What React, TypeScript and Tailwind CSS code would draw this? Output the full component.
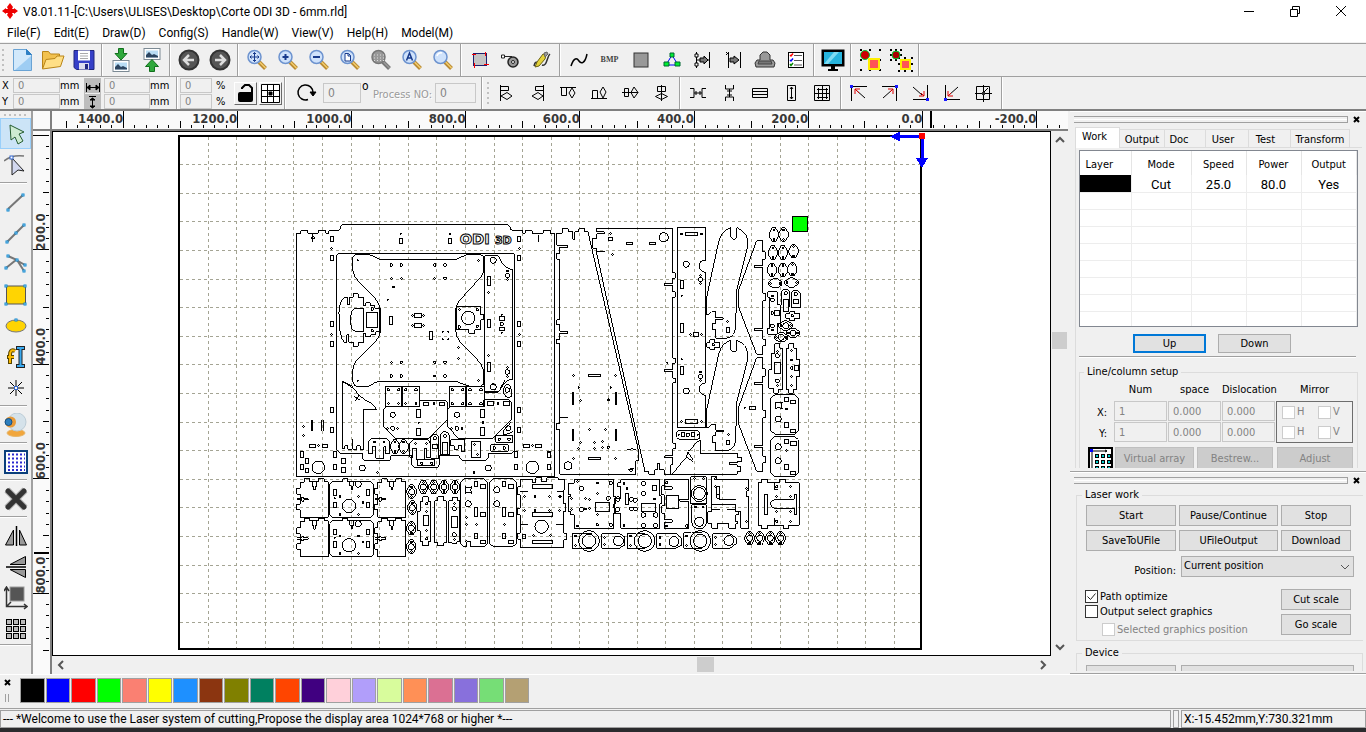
import type { ReactNode } from "react";

const ui = "font-['DejaVu_Sans_Condensed','Liberation_Sans',sans-serif]";
const segoe = "font-[Roboto,'Open_Sans',sans-serif]";

/* ---------- toolbar pieces ---------- */

function Tool({ label, children, on = false }: { label: string; children: ReactNode; on?: boolean }) {
  return (
    <button
      type="button"
      aria-label={label}
      className={
        "flex h-[31px] w-[31px] shrink-0 items-center justify-center " +
        (on ? "border border-[#99cffa] bg-[#cce4f7]" : "")
      }
    >
      <svg width="24" height="24" viewBox="0 0 24 24" fill="none" stroke="#000">
        {children}
      </svg>
    </button>
  );
}

function Sep() {
  return <span className="mx-[2px] w-[2px] shrink-0 self-stretch border-r border-white bg-[#a0a0a0]" />;
}

function HSep() {
  return <span className="my-[2px] h-[2px] w-[27px] shrink-0 border-b border-white bg-[#a0a0a0]" />;
}

function Grip() {
  return (
    <svg width="3" height="24" className="mr-[1px] ml-[2px] shrink-0">
      <path d="M1 1v22" stroke="#c0c0c0" strokeWidth="2" strokeDasharray="2 3" />
    </svg>
  );
}

function Lens({ children, grey = false }: { children?: ReactNode; grey?: boolean }) {
  return (
    <>
      <path d="M14 14l6.500 6.500" stroke={grey ? "#777" : "#b98a32"} strokeWidth="4" />
      <path d="M14.500 14l6 6" stroke={grey ? "#999" : "#f3cd6e"} strokeWidth="1.500" />
      <circle cx="9.500" cy="9" r="6.500" fill={grey ? "#999" : "#cfe2fb"} stroke={grey ? "#777" : "#6d93cf"} strokeWidth="1.500" />
      {children}
    </>
  );
}

function Picture({ y }: { y: number }) {
  return (
    <g transform={`translate(0 ${y})`}>
      <rect x="4" y="0.500" width="16" height="11" fill="#fff" stroke="#7c8a94" />
      <rect x="6" y="2.500" width="12" height="7" fill="#b8dcf4" stroke="none" />
      <path d="M6 9.500V7l3-3 3 3 2-1 4 2v1.500z" fill="#2c4560" stroke="none" />
    </g>
  );
}

const dot = "#1a1aff";

function FileTools() {
  return (
    <div className="flex h-[32px] items-center">
      <Grip />
      <Tool label="New">
        <path d="M3.500 1.500h13l5 5v16h-18z" fill="#d2e9fb" stroke="#6aa3d4" />
        <path d="M5 22L21 8v14z" fill="#9ecdf3" stroke="none" />
        <path d="M16.500 1.500v5h5z" fill="#2f80c4" stroke="#2f80c4" />
      </Tool>
      <Tool label="Open">
        <path d="M1.500 20.500V3.500h6l2 2.500h9v4" fill="#f2c14e" stroke="#b98518" />
        <path d="M1.500 21L5 11.500l9-1 2-2.500h7l-3.500 10.500z" fill="#ffdf86" stroke="#b98518" />
      </Tool>
      <Tool label="Save">
        <path d="M2 2.500h20v19H4.500L2 19.500z" fill="#3640c8" stroke="#20267f" />
        <path d="M6 2.500h12v10H6z" fill="#fff" stroke="none" />
        <path d="M8 5.500h8M8 8h8M8 10.500h8" stroke="#aaa" />
        <path d="M7 15h10v6.500H7z" fill="#dde" stroke="none" />
        <path d="M13 16h3v5h-3z" fill="#20267f" stroke="none" />
      </Tool>
      <Sep />
      <Tool label="Import">
        <Picture y={12} />
        <path d="M9.500 0.500h5v5h3.500l-6 6.500-6-6.500h3.500z" fill="#2fa83c" stroke="#11701c" />
      </Tool>
      <Tool label="Export">
        <Picture y={0} />
        <path d="M9.500 23.500h5v-5h4l-6.500-7-6.500 7h4z" fill="#2fa83c" stroke="#11701c" />
      </Tool>
      <Sep />
      <Tool label="Undo">
        <circle cx="12" cy="12" r="9.500" fill="#555" stroke="#333" strokeWidth="2" />
        <path d="M17 12H8M12 7l-5 5 5 5" stroke="#ddd" strokeWidth="2.500" />
      </Tool>
      <Tool label="Redo">
        <circle cx="12" cy="12" r="9.500" fill="#555" stroke="#333" strokeWidth="2" />
        <path d="M7 12h9M12 7l5 5-5 5" stroke="#ddd" strokeWidth="2.500" />
      </Tool>
      <Sep />
      <Tool label="Pan">
        <Lens><path d="M9.500 4.500v9M5 9h9M8 6l1.500-1.500L11 6M8 12l1.500 1.500L11 12M6.500 7.500L5 9l1.500 1.500M12.500 7.500L14 9l-1.500 1.500" stroke="#173a8c" /></Lens>
      </Tool>
      <Tool label="Zoom in">
        <Lens><path d="M9.500 6v6M6.500 9h6" stroke="#173a8c" strokeWidth="2" /></Lens>
      </Tool>
      <Tool label="Zoom out">
        <Lens><path d="M6 9h7" stroke="#173a8c" strokeWidth="2" /></Lens>
      </Tool>
      <Tool label="Zoom page">
        <Lens><path d="M7 5.500h3.500l2 2v5.500H7zM10 5.500v2.500h2.500" fill="#fff" stroke="#173a8c" /></Lens>
      </Tool>
      <Tool label="Zoom frame">
        <Lens grey><path d="M5 7h10M5 10h10M5 12.500h10" stroke="#ddd" strokeWidth="1" strokeDasharray="1 2" /></Lens>
      </Tool>
      <Tool label="Zoom all">
        <Lens><path d="M6.500 12.500l3-7.500 3 7.500M7.500 10h4" stroke="#173a8c" strokeWidth="1.500" /></Lens>
      </Tool>
      <Tool label="Zoom select">
        <Lens><path d="M6 8a4 4 0 0 1 5-3" stroke="#fff" strokeWidth="1.500" /></Lens>
      </Tool>
      <Sep />
      <Tool label="Track frame">
        <rect x="5.500" y="5.500" width="13" height="12" fill="#c4c4c4" stroke="#1f1f6c" />
        <path d="M4 6.500h4M17.500 4v4M16 16.500h5M6.500 15v5" stroke="#f00" />
      </Tool>
      <Tool label="Cut point">
        <path d="M4 8.500h9" stroke="#222" />
        <path d="M2.500 7h3v3h-3z" fill="#fff" stroke="#222" />
        <circle cx="14" cy="14" r="5" fill="#999" stroke="#222" strokeWidth="1.500" />
        <circle cx="14" cy="14" r="1.500" fill="#fff" stroke="#222" />
      </Tool>
      <Tool label="Edit cut">
        <path d="M4 18c1-5 3-4 4-3M12 17c5 2 5-9 8-11" stroke="#333" strokeWidth="1.500" />
        <path d="M5 19l2-5 6-8 3 1-1 4-6 7z" fill="#e4d23a" stroke="#6b6212" />
        <path d="M14 5l3-1 1 2-3 3z" fill="#999" stroke="#666" />
      </Tool>
      <Sep />
      <Tool label="Curve smooth">
        <path d="M4 18c3-9 6-8 8-5s6 3 8-7" strokeWidth="1.500" />
      </Tool>
      <button type="button" className="flex h-[31px] w-[31px] items-center justify-center font-['Liberation_Serif',serif] text-[8px] font-bold text-[#444]">
        BMP
      </button>
      <Tool label="Fill">
        <rect x="5" y="5" width="14" height="14" fill="#999" stroke="#333" />
      </Tool>
      <Tool label="Group nodes">
        <path d="M12 7L6 17M12 7l6 10M6 17h12" stroke="#00f" />
        <path d="M10 5h4v4h-4zM4 14h5v4H4zM15 14h5v4h-5z" fill="#0e3" stroke="#063" />
      </Tool>
      <Tool label="Offset curve">
        <path d="M5.500 4v16M18.500 4v16M5 12h4M15 12h3" />
        <path d="M9 10h4V8l4 4-4 4v-2H9z" fill="#777" />
        <path d="M4 6h3v3H4zM4 15h3v3H4z" fill="#fff" />
      </Tool>
      <Tool label="Join">
        <path d="M6.500 5v15M18.500 4v16M4 4l3 3M7 4L4 7" />
        <path d="M8 10h4V8l5 4-5 4v-2H8z" fill="#777" />
      </Tool>
      <Tool label="Preview path">
        <path d="M7 12V7l3-3h4l3 3v5h3l2 3-1 4H3l-1-4 2-3z" fill="#999" stroke="#333" />
        <path d="M6 13h12l1 3H5z" fill="#777" stroke="#444" />
      </Tool>
      <Tool label="Check list">
        <rect x="4.500" y="4.500" width="15" height="15" fill="#fff" />
        <path d="M10 7.500h8M10 12.500h8M10 17h8" stroke="#555" />
        <path d="M6 7l1 1 2-2.500" stroke="#f00" strokeWidth="1.500" />
        <path d="M6 12l1 1 2-2.500" stroke="#00f" strokeWidth="1.500" />
        <path d="M6 16l1 1.500 2-2.500" stroke="#080" strokeWidth="1.500" />
      </Tool>
      <Sep />
      <Tool label="Monitor">
        <rect x="1" y="2" width="22" height="16" fill="#000" />
        <rect x="3" y="4" width="18" height="12" fill="#27b4dd" stroke="none" />
        <path d="M3 16L13 4h5L7 16z" fill="#7fdcf2" stroke="none" />
        <path d="M10 18h4v3h3v2H7v-2h3z" fill="#000" stroke="none" />
      </Tool>
      <Sep />
      <Tool label="Group">
        <path d="M2 2h2M11 2h2M21 2h2M2 22h2M11 22h2M21 22h2M2 12h2M21 12h2" strokeWidth="2" />
        <circle cx="7" cy="7" r="4.500" fill="#c00" stroke="#0c3" />
        <rect x="11" y="11" width="10" height="10" fill="#f55" stroke="#fe0" strokeWidth="2" />
      </Tool>
      <Tool label="Ungroup">
        <path d="M1 2h2M6 2h2M11 2h2M1 7h2M11 7h2M1 12h2M6 12h2M9 10h2M15 10h2M22 10h2M9 16h2M22 16h2M9 23h2M15 23h2M22 23h2" strokeWidth="2" />
        <circle cx="7" cy="7" r="4" fill="#a00" stroke="#0c3" />
        <rect x="12" y="12" width="9" height="9" fill="#f55" stroke="#fe0" strokeWidth="2" />
      </Tool>
      <Sep />
    </div>
  );
}

function NumField({ label, value, className }: { label: string; value: string; className: string }) {
  return (
    <input
      aria-label={label}
      defaultValue={value}
      disabled
      className={"border border-[#c8c8c8] bg-[#f0f0f0] pl-1 text-[11px] text-[#838383] outline-none " + className}
    />
  );
}

const alignIcons: [string, string][] = [
  ["Align left", "M6.500 4v16M6.500 5.500h8v4h-8M7 15l6-3.500 5 3.500-5 3.500z"],
  ["Align right", "M18.500 4v16M18.500 5.500h-8v4h8M7 15l6-3.500 5 3.500-5 3.500z"],
  ["Align top", "M4 6.500h16M5.500 6.500v8h5v-8M16 7l3 5-3 5-3-5z"],
  ["Align bottom", "M4 17.500h16M5.500 17.500v-8h5v8M16 6l3 5-3 6-3-6z"],
  ["Align middle", "M4 11.500h16M6.500 7.500h4v8h-4zM16 6l4 5.500-4 5.500-3-5.500z"],
  ["Align center", "M12.500 4v16M8.500 5.500h8v5h-8zM12.500 12.500l6 3-6 3-6-3z"],
];

const sizeIcons: [string, string][] = [
  ["Space across", "M4 7.500h4v9H4M20 7.500h-4v9h4M8 12h8M10 10v4M14 10v4"],
  ["Space down", "M8.500 4v4h8V4M8.500 20v-4h8v4M12.500 8v8M10 10h5M10 14h5"],
  ["Same width", "M4.500 7.500h15v9h-15zM5 10.500h14M5 13.500h14"],
  ["Same height", "M8.500 4.500h8v15h-8zM12.500 6v12M11 8l1.500-2L14 8M11 16l1.500 2 1.500-2"],
  ["Same size", "M4.500 4.500h15v15h-15zM12.500 5v15M5 12.500h15M7 8.500h11M7 16.500h11M8.500 7v11M16.500 7v11"],
];

function AxisTools() {
  return (
    <div className={"flex h-[32px] items-center overflow-hidden " + ui}>
      <div className="grid shrink-0 grid-cols-[13px_47px_24px] items-center gap-y-[1px] text-[11px] leading-[15px]">
        <span className="pl-[2px]">X</span>
        <NumField label="X" value="0" className="h-[15px]" />
        <span>mm</span>
        <span className="pl-[2px]">Y</span>
        <NumField label="Y" value="0" className="h-[15px]" />
        <span>mm</span>
      </div>
      <svg width="17" height="31" className="shrink-0 bg-[#bdbdbd]" stroke="#000" fill="#000">
        <path d="M1 15.500h15" stroke="#eee" />
        <path d="M3 9.500h12M6 7L3 9.500 6 12zM12 7l3 2.500-3 2.500zM2.500 5v9M15.500 5v9" />
        <path d="M8.500 20v10M6 22l2.500-2 2.500 2zM5 18.500h7M6 28l2.500 2 2.500-2z" />
      </svg>
      <div className="grid shrink-0 grid-cols-[46px_24px] items-center gap-y-[1px] pl-[3px] text-[11px] leading-[15px]">
        <NumField label="Width" value="0" className="h-[15px]" />
        <span>mm</span>
        <NumField label="Height" value="0" className="h-[15px]" />
        <span>mm</span>
      </div>
      <Sep />
      <div className="grid shrink-0 grid-cols-[32px_22px] items-center gap-y-[1px] text-[11px] leading-[15px]">
        <NumField label="Scale X" value="0" className="h-[15px] w-8" />
        <span className="pl-1">%</span>
        <NumField label="Scale Y" value="0" className="h-[15px] w-8" />
        <span className="pl-1">%</span>
      </div>
      <button type="button" aria-label="Lock ratio" className="h-[23px] w-[23px] shrink-0 border border-r-[#696969] border-b-[#696969] border-t-white border-l-white">
        <svg width="21" height="21" fill="none" stroke="#000" strokeWidth="2">
          <path d="M7 6V5l3-3h4l3 3v6" />
          <rect x="4" y="10" width="13" height="8" rx="1" fill="#000" />
        </svg>
      </button>
      <button type="button" aria-label="Anchor point" className="ml-[2px] h-[23px] w-[23px] shrink-0 border border-r-[#696969] border-b-[#696969] border-t-white border-l-white">
        <svg width="21" height="21" fill="none" stroke="#000">
          <path d="M1.500 1.500h18v18h-18z" fill="#fff" />
          <path d="M7.500 1v19M13.500 1v19M1 7.500h19M1 13.500h19" />
          <path d="M9 9h3v3H9z" fill="#000" />
        </svg>
      </button>
      <Sep />
      <svg width="35" height="24" fill="none" stroke="#000" className="shrink-0">
        <path d="M20 18.500a7.500 7.500 0 1 1 5-7" strokeWidth="1.500" />
        <path d="M22 11h6l-3 4z" fill="#000" />
      </svg>
      <NumField label="Angle" value="0" className="h-5 w-[38px] shrink-0 text-[12px]" />
      <span className="w-[12px] shrink-0 self-start pt-[2px] pl-[1px] text-[12px] leading-[15px]">o</span>
      <label htmlFor="process-no" className="shrink-0 pt-1 pr-[3px] text-[11px] text-[#9a9a9a] [text-shadow:1px_1px_#fff]">
        Process NO:
      </label>
      <input id="process-no" disabled defaultValue="0" className="h-5 w-[41px] shrink-0 border border-[#c8c8c8] pl-1 text-[12px] text-[#838383]" />
      <span className="w-[3px] shrink-0" />
      <Sep />
      <Grip />
      {alignIcons.map(([label, d]) => (
        <Tool key={label} label={label}>
          <path d={d} />
        </Tool>
      ))}
      <Sep />
      {sizeIcons.map(([label, d]) => (
        <Tool key={label} label={label}>
          <path d={d} />
        </Tool>
      ))}
      <Sep />
      <Tool label="Move to top left">
        <path d="M4.500 20V5.500H20M18 17L9 9" />
        <path d="M12 12L8 8M8 13V8h5" stroke="#d00" />
        <path d="M3 4h3v3H3z" fill={dot} stroke="none" />
      </Tool>
      <Tool label="Move to top right">
        <path d="M4 5.500h14.500V20M5 17l9-8" />
        <path d="M12 11l3-3M10 8h5v5" stroke="#d00" />
        <path d="M17 4h3v3h-3z" fill={dot} stroke="none" />
      </Tool>
      <Tool label="Move to bottom right">
        <path d="M4 18.500h14.500V4M4 6l9 8" />
        <path d="M12 12l3 3M15 10v5h-5" stroke="#d00" />
        <path d="M17 17h3v3h-3z" fill={dot} stroke="none" />
      </Tool>
      <Tool label="Move to bottom left">
        <path d="M20 18.500H5.500V4M18 6l-9 8" />
        <path d="M11 12l-3 3M8 10v5h5" stroke="#d00" />
        <path d="M4 17h3v3H4z" fill={dot} stroke="none" />
      </Tool>
      <Tool label="Move to center">
        <path d="M5.500 5.500h13v13h-13zM12.500 4v17M4 12.500h17M12 12l5-5" />
        <path d="M11 11h3v3h-3z" fill="#333" stroke="none" />
      </Tool>
      <Sep />
    </div>
  );
}

const node = (x: number, y: number) => <rect key={`${x}-${y}`} x={x - 1} y={y - 1} width="2" height="2" fill="#fff" stroke="#0a86d0" />;

function DrawTools() {
  return (
    <div className="flex w-[33px] shrink-0 flex-col border-r-2 border-[#a0a0a0]">
      <svg width="26" height="7" className="ml-1 shrink-0">
        <path d="M0 4h24" stroke="#c0c0c0" strokeWidth="2" strokeDasharray="2 3" />
      </svg>
      <Tool label="Select" on>
        <path d="M6 3l14 7-5 2 4 7-5 3-3-7-4 3z" fill="#cdebd2" stroke="#255c30" />
      </Tool>
      <Tool label="Edit nodes">
        <path d="M0 8c6-5 12-6 20-5" stroke="#777" strokeWidth="1.500" />
        <path d="M8 5l12 13-6-1-6 5z" fill="#d3d8ef" stroke="#222" />
        <rect x="6" y="3" width="3" height="3" fill="#fff" stroke="#36c" />
      </Tool>
      <HSep />
      <Tool label="Line">
        <path d="M4 19L19 5" stroke="#777" strokeWidth="2" />
        {[node(4, 20), node(19, 5)]}
      </Tool>
      <Tool label="Polyline">
        <path d="M3 21L20 4" stroke="#777" strokeWidth="2" />
        {[node(3, 21), node(12, 12), node(20, 4)]}
      </Tool>
      <Tool label="Bezier">
        <path d="M4 4l9 4 7 11M2 16l10-8 9 5" stroke="#777" strokeWidth="2" />
        {[node(4, 4), node(2, 16), node(13, 8), node(21, 13), node(20, 19)]}
      </Tool>
      <Tool label="Rectangle">
        <rect x="2.500" y="3" width="19" height="18" fill="#ffd402" stroke="#555" />
        {[node(2, 3), node(21, 3), node(2, 21), node(21, 21)]}
      </Tool>
      <Tool label="Ellipse">
        <ellipse cx="12" cy="12" rx="10" ry="6" fill="#ffd402" stroke="#777" />
        {node(12, 6)}
      </Tool>
      <Tool label="Text">
        <path d="M11 6c-4-2-5 1-5 4v9M3 12h7" stroke="#5a4600" strokeWidth="4" />
        <path d="M11 6c-4-2-5 1-5 4v8M4 12h6" stroke="#f8b800" strokeWidth="2" />
        <path d="M12 3h9M16.500 3v18M12 21h9" stroke="#222" strokeWidth="4" />
        <path d="M13 3h7M16.500 3v18M13 21h7" stroke="#39a9ef" strokeWidth="2" />
      </Tool>
      <Tool label="Point">
        <path d="M12 4v16M4 12h16M6 6l12 12M18 6L6 18" />
        <rect x="10.500" y="10.500" width="3" height="3" fill="#fff" stroke="#36c" />
      </Tool>
      <HSep />
      <Tool label="Camera">
        <ellipse cx="12" cy="20" rx="9" ry="3.500" fill="#f1a63c" stroke="#e6b569" />
        <circle cx="13" cy="9" r="9" fill="#d5e2ea" stroke="#bcccd6" />
        <circle cx="6.500" cy="9" r="5.500" fill="#e89a38" stroke="none" />
        <circle cx="4.500" cy="9" r="3.500" fill="#2d7fbe" stroke="#174f80" />
      </Tool>
      <HSep />
      <Tool label="Grid">
        <rect x="1" y="1" width="22" height="22" fill="#fff" stroke="#0b3f7c" strokeWidth="2" />
        <path d="M4 4.500h17M4 8.500h17M4 12.500h17M4 16.500h17M4 20h17" stroke="#2a2ad0" strokeWidth="2" strokeDasharray="2 2" />
      </Tool>
      <HSep />
      <Tool label="Delete">
        <path d="M3 3l18 18M21 3L3 21" stroke="#aaa" strokeWidth="7" />
        <path d="M4 4l16 16M20 4L4 20" stroke="#333" strokeWidth="5" strokeLinecap="round" />
      </Tool>
      <HSep />
      <Tool label="Mirror horizontal">
        <path d="M9.500 6v15h-8zM15.500 6v15h7z" fill="#999" />
        <path d="M12.500 2v20" strokeWidth="1.500" />
      </Tool>
      <Tool label="Mirror vertical">
        <path d="M21.500 1.500v8H6zM21.500 14.500v8L6 14.500z" fill="#999" />
        <path d="M2 12h20" strokeWidth="1.500" />
      </Tool>
      <Tool label="Rotate">
        <rect x="6" y="1" width="14" height="14" fill="#555" stroke="#999" />
        <path d="M2.500 2v18.500H22M20 18l3 2.500-3 2.500M0 5l2.500-4L5 5M3 20l4-4" strokeWidth="1.500" stroke="#333" />
      </Tool>
      <Tool label="Array">
        {[3, 10, 17].map((y) =>
          [3, 10, 17].map((x) => <rect key={`${x}-${y}`} x={x - 0.5} y={y - 0.5} width="5" height="5" fill="#bbb" />)
        )}
      </Tool>
      <span className="h-[2px] border-b border-white bg-[#a0a0a0]" />
    </div>
  );
}

/* ---------- drawing ---------- */

type Spot = [number, number, number];
type Box = [number, number, number, number];

function Holes({ at }: { at: Spot[] }) {
  return (
    <>
      {at.map(([x, y, r], i) => (
        <circle key={i} cx={x} cy={y} r={r} />
      ))}
    </>
  );
}

function Slots({ at }: { at: Box[] }) {
  return (
    <>
      {at.map(([x, y, w, h], i) => (
        <rect key={i} x={x} y={y} width={w} height={h} />
      ))}
    </>
  );
}

function Links({ at, flat = false, open = false }: { at: [number, number][]; flat?: boolean; open?: boolean }) {
  return (
    <>
      {at.map(([x, y], i) => (
        <g key={i} transform={`translate(${x} ${y}) rotate(${flat ? 90 : 0})`}>
          <path d="M-5 -20H5L14 -5V5L5 20H-5L-14 5V-5Z" />
          {!open && <circle r="9" />}
          <circle cy="-14" r="3" />
          <circle cy="14" r="3" />
        </g>
      ))}
    </>
  );
}

const sideNotch =
  "M46 307H58V297H74V305H100V297H118V305H130V412H46V390H36V373H46V343H36V325H46ZM82 305V320H86V330H91V320H94V305M36 356H50V352H56V356H70V360H56V364H50V360H36";
const badge = "M142 305H173V297H188V305H258L265 312V405L258 412H142L134 404V313ZM195 305V318H199V328H203V318H207V305";
const leg =
  "M485 315V262L521 95Q530 60 558 53V82Q567 95 576 82V53Q605 65 608 92V110L575 240L572 350Q570 380 548 384L512 385V360H503V340H512V328H535V323H512V305H500L490 315Z";
const blade =
  "M654 92H635L581 240V292L635 433H654V408H661V388H654V361H628V355H654V273H661V250H654V172H628V166H654V148H661V125H654Z";

function Chassis() {
  return (
    <g transform="translate(285 215) scale(0.3333)">
      <path d="M34 785V55H47V47H68V55H100V47H122V55H131V47H160L166 42V36L174 28H668L676 36V42L683 47H713V55H721V47H742V55H775V47H796V55H808V785Z" />
      <path d="M155 510V123Q156 115 164 115H682Q689 116 689 123V510M172 498L205 515M84 55V80M760 60V80M80 66h8v6h-8z" />
      <path d="M202 130V160Q205 185 225 205L270 250Q285 265 285 290V345Q285 365 272 378L218 432Q203 450 203 475V497Q205 515 220 515H250L270 503L285 499H515L535 508L560 515H585Q597 512 597 497V470Q590 445 575 432L525 380Q512 365 512 345V290Q512 268 525 255L575 200Q597 180 597 158V130Q595 118 580 118H550L530 125L515 133H285L262 122L245 118H215Q203 120 202 130Z" />
      <path d="M599 122V532H640L655 510Q660 496 683 493V165Q660 158 650 142L640 122Z" />
      <path d="M162 290Q165 255 180 247H187V270H193V247H205V237H220V247H236V272H242V263H256V272H270V280H283V350H272V360H258V365H242V355H236V382H220V394H205V382H192V360H186V382H177Q160 360 162 290ZM236 280H212Q198 285 198 300V330Q198 345 212 349H236Z" />
      <path d="M515 275H587V300H597V315H587V345H570V355H552V345H515ZM236 300V335M286 278V355" />
      <Slots
        at={[
          [244, 292, 34, 46], [136, 64, 9, 15], [136, 122, 9, 16], [136, 320, 9, 16], [136, 380, 9, 16],
          [698, 64, 9, 15], [698, 122, 9, 16], [698, 320, 9, 16], [698, 380, 9, 16],
          [344, 70, 9, 17], [490, 70, 9, 17], [314, 304, 9, 24], [388, 295, 22, 12], [388, 325, 22, 12],
          [434, 350, 9, 23], [607, 185, 9, 26], [607, 313, 9, 26], [607, 443, 9, 26], [643, 305, 16, 11], [643, 338, 16, 9],
        ]}
      />
      <Holes
        at={[
          [550, 309, 20], [625, 136, 9], [625, 516, 9], [667, 181, 7], [667, 471, 7], [650, 327, 5],
          [319, 150, 4], [349, 150, 4], [449, 150, 4], [480, 150, 5], [319, 190, 3], [349, 190, 3], [449, 190, 3], [480, 190, 4],
          [319, 442, 3], [349, 442, 4], [449, 442, 4], [480, 442, 4], [319, 483, 4], [349, 483, 4], [449, 483, 3], [480, 483, 5],
          [325, 216, 3], [308, 255, 2], [219, 136, 2], [580, 136, 3], [219, 497, 2], [580, 497, 3],
          [473, 351, 2], [490, 351, 2], [473, 373, 2], [490, 373, 2], [382, 301, 3], [416, 301, 3], [382, 331, 3], [416, 331, 3],
          [520, 398, 3], [520, 431, 3], [610, 232, 3], [610, 421, 3], [140, 100, 3], [703, 100, 3], [140, 358, 3], [703, 358, 3],
          [347, 57, 2], [495, 57, 3], [667, 168, 3], [667, 194, 3], [667, 458, 3], [667, 485, 3], [650, 299, 2], [650, 353, 2],
          [523, 284, 3], [577, 284, 4], [523, 336, 4], [577, 334, 4], [262, 282, 4], [262, 347, 4],
        ]}
      />
      <g fontFamily="DejaVu Sans, sans-serif" fontWeight="bold" fill="#fff" strokeWidth="3">
        <text x="524" y="88" fontSize="44">ODI</text>
        <text x="630" y="88" fontSize="33">3D</text>
      </g>
    </g>
  );
}

function LowerParts() {
  return (
    <g transform="translate(285 380) scale(0.3333)">
      <path d="M155 0V210L165 220H232V233Q234 243 246 243H305Q318 243 318 232V228H380V255L388 263H458L463 255V228H522Q526 240 535 243H600L610 233V220H680L689 210V0" />
      <path d="M172 5V205H180V198H188V208H202V180M204 178V208H216V198H226V208H236V88H275L262 72L240 60L222 45L212 62M222 45L205 25L190 15L172 5M225 60L208 50M80 120V152M84 120V152M111 120V152M115 120V152" />
      <path d="M296 88L304 80H404V62H482L488 68V118L430 177H332L296 140ZM488 88L496 80H596V60H672L680 68V118L621 177H522L488 140ZM599 36H635Q645 36 650 18L660 0" />
      <path d="M250 222V185L260 175H305L313 185V222H302V200H296V235H272V200H262V222ZM374 232V190L384 180H428L437 190V232H424V205H418V240H395V205H384V232Z" />
      <path d="M437 235V175Q438 163 450 163Q462 165 462 175V235ZM467 225V165Q470 154 480 154Q492 156 493 167V225ZM497 180H540V215H530V198H520V208H508V198H497Z" />
      <path d="M34 290H808M398 238H450V258H398ZM617 195H670V214H617ZM632 168H683V187H632ZM680 50Q680 12 668 12Q655 20 655 35Q660 58 680 50ZM680 125L657 150V165L685 155" />
      <Slots
        at={[
          [301, 20, 48, 60], [352, 20, 52, 60], [493, 20, 50, 60], [546, 20, 52, 60], [559, 184, 28, 48],
          [395, 90, 11, 22], [395, 145, 11, 22], [588, 88, 10, 24], [588, 142, 10, 24], [415, 67, 16, 9], [464, 67, 16, 9],
          [607, 65, 18, 11], [655, 65, 18, 11], [136, 82, 9, 17], [136, 142, 9, 16], [698, 82, 9, 17], [698, 142, 9, 16],
          [73, 193, 18, 9], [112, 193, 16, 9], [715, 193, 18, 9], [752, 193, 17, 9], [46, 216, 10, 16], [46, 254, 10, 16],
          [61, 236, 10, 14], [61, 265, 10, 14], [145, 216, 10, 16], [145, 254, 10, 16], [169, 235, 13, 15], [169, 264, 13, 15],
          [688, 216, 9, 16], [688, 254, 9, 16], [787, 216, 9, 16], [787, 254, 9, 16], [442, 193, 16, 12], [472, 187, 16, 38],
        ]}
      />
      <Holes
        at={[
          [323, 104, 8], [516, 104, 8], [323, 145, 6], [516, 145, 6], [100, 262, 19], [742, 262, 19], [232, 264, 9], [610, 264, 9],
          [310, 29, 4], [341, 29, 4], [362, 29, 4], [393, 29, 4], [310, 71, 3], [341, 71, 3], [362, 71, 3], [393, 71, 3],
          [502, 29, 4], [533, 29, 4], [555, 29, 4], [588, 29, 4], [502, 71, 4], [533, 71, 4], [555, 71, 4], [588, 71, 4],
          [447, 71, 3], [639, 71, 3], [402, 128, 2], [594, 128, 3], [449, 175, 5], [480, 168, 5], [410, 250, 4], [440, 250, 4],
          [628, 204, 4], [658, 204, 4], [643, 178, 4], [672, 178, 4], [56, 140, 3], [56, 167, 3], [100, 197, 3], [743, 197, 3],
          [569, 193, 3], [577, 224, 3], [277, 277, 3], [567, 277, 3], [307, 145, 3], [338, 145, 3], [500, 145, 3], [531, 145, 3],
          [268, 186, 3], [297, 186, 3], [392, 190, 3], [424, 190, 3], [667, 30, 7], [670, 145, 8], [625, 20, 9],
        ]}
      />
      {[0, 118].map((dy) => (
        <g key={dy} transform={`translate(0 ${dy})`}>
          <path d={sideNotch} />
          <path d={sideNotch} transform="translate(233 0)" />
          <path d={badge} />
          <Slots at={[[145, 330, 9, 16], [145, 368, 9, 16], [246, 330, 9, 16], [246, 368, 9, 16]]} />
          <Holes at={[[192, 378, 20], [220, 313, 9], [165, 350, 3], [220, 350, 3], [165, 403, 3], [220, 403, 3], [234, 368, 3], [150, 355, 2]]} />
        </g>
      ))}
      <Links at={[[380, 335], [382, 383], [379, 445], [379, 500], [415, 321], [446, 321], [477, 321], [510, 321]]} />
      <Links open at={[[330, 200], [356, 200]]} />
      <path d="M414 350H430V365H438V485H430V498H414V485H406V452H398V394H406V365H414ZM458 350H476V362H484V488H476V498H458V488H450V362H458ZM502 354H518V362H524V485H516V490H500V488H492V362H502Z" />
      <path d="M537 297H598L609 308V490L598 500H558V485H545V500H537L527 490V308ZM625 297H683L695 308V490L683 500H625L613 490V308ZM540 320Q550 328 560 320Q554 330 560 340Q550 334 540 340Q546 330 540 320Z" />
      <path d="M706 300H744V308H752V293H770V305H785V293H820V300H840V330H836V372H843V394H836V460H845V480H836V502H706V478H698V460H706V405H697V385H706V345H698V320H706ZM706 336H730M816 336H836M706 434H730M812 434H836" />
      <Slots
        at={[
          [415, 408, 17, 30], [500, 410, 17, 32], [568, 305, 9, 16], [587, 313, 16, 12], [568, 382, 9, 27], [587, 398, 16, 12],
          [568, 461, 9, 16], [587, 481, 16, 9], [654, 305, 9, 16], [670, 313, 16, 12], [654, 382, 9, 27], [670, 398, 16, 12],
          [654, 461, 9, 16], [670, 481, 16, 9], [743, 314, 60, 12], [743, 398, 60, 12], [743, 481, 60, 9], [714, 464, 9, 11],
        ]}
      />
      <Holes
        at={[
          [770, 440, 20], [635, 329, 9], [635, 371, 9], [550, 371, 9], [425, 371, 4], [425, 395, 3], [425, 452, 3], [425, 476, 4],
          [508, 386, 6], [508, 464, 6], [508, 370, 3], [508, 478, 3], [544, 413, 3], [544, 434, 3], [575, 434, 3], [658, 434, 3],
          [719, 350, 3], [750, 350, 3], [793, 350, 3], [824, 350, 3], [719, 392, 3], [750, 392, 3], [793, 392, 3], [824, 392, 3],
          [745, 466, 3], [797, 466, 3], [545, 484, 3],
        ]}
      />
    </g>
  );
}

function SideParts() {
  return (
    <g transform="translate(545 210) scale(0.3333)">
      <path d="M0 62H18V70H28V790M36 70H52V56H70V64H84V88H90V66H102V56H120V66H129L280 720V752H272V793H44V660H36V640H44V402H36V388H44V370H68V364H44V345H36V330H44V148H36V130H44V112H68V106H36Z" />
      <path d="M155 55H383V188H391V205H383V220H358V227H383V245H391V262H383V445H391V460H383V478H358V485H383V505H391V518H383V700H391V717H383V738H360V744H383V765H377V793H358V780H343V760H337V780H330V793H312V785H300L155 130V115H143V85H155V72H178V65H155Z" />
      <path d="M397 52H482V150Q464 152 464 160V172Q464 184 482 188V518Q464 522 464 530V545Q468 553 482 558V653H397Z" />
      <path d={leg} />
      <path d={leg} transform="translate(0 338)" />
      <path d={blade} />
      <path d={blade} transform="translate(0 351)" />
      <path d="M155 126H180M395 665L402 662H458L465 668V684L458 688H402L395 682ZM485 398H494V390H510V398H524V412H510V418H494V412H485Z" />
      <path d="M668 245H697V285H706V340H697V373H668V355H674V262H668ZM709 285V250Q712 237 722 237Q733 240 735 250V290M739 292V253Q742 240 752 240Q764 243 767 253V292ZM716 268H730V305H716ZM722 312H735V305H750V312H764V325H750V332H735V325H722Z" />
      <path d="M690 402H704V415H712V430V540H700V550H686V535H672V480H680V430H690ZM732 402H746V415H754V448H763V500H754V540H745V550H732V540H724V415H732Z" />
      <Links open at={[[687, 74], [716, 74], [684, 128], [714, 128], [746, 124], [681, 180], [714, 180], [742, 178]]} />
      <Links open flat at={[[691, 220], [740, 218]]} />
      <Links flat at={[[722, 347], [744, 369], [709, 382]]} />
      <Slots
        at={[
          [190, 83, 12, 8], [244, 97, 18, 6], [313, 97, 18, 6], [422, 67, 36, 9], [406, 212, 9, 25], [406, 341, 9, 26], [406, 470, 9, 23],
          [446, 368, 14, 11], [544, 353, 9, 14], [130, 493, 36, 6], [690, 302, 14, 14], [745, 270, 15, 11], [748, 467, 14, 14], [688, 458, 18, 34],
          [544, 691, 11, 14], [613, 590, 20, 8], [422, 630, 36, 10], [409, 668, 10, 13], [440, 668, 10, 13],
        ]}
      />
      <Holes
        at={[
          [356, 82, 14], [424, 163, 9], [424, 543, 9], [467, 208, 7], [467, 499, 7], [467, 196, 3], [467, 220, 3], [467, 486, 3], [467, 511, 3],
          [196, 70, 3], [202, 133, 3], [410, 72, 3], [469, 72, 3], [410, 258, 2], [437, 374, 3], [470, 374, 3], [410, 448, 2], [367, 458, 2],
          [85, 496, 3], [211, 496, 3], [101, 533, 2], [197, 533, 2], [191, 570, 3], [107, 571, 3], [505, 404, 4], [547, 335, 3],
          [682, 270, 6], [682, 348, 6], [682, 309, 4], [682, 258, 3], [682, 360, 3], [722, 250, 5], [752, 252, 5], [742, 317, 4],
          [697, 437, 6], [697, 513, 6], [697, 424, 3], [697, 526, 3], [740, 422, 3], [740, 450, 3], [740, 474, 4], [740, 500, 3], [740, 526, 3],
          [429, 675, 6], [401, 675, 2], [459, 675, 2], [409, 634, 3], [470, 634, 3], [600, 593, 2], [550, 673, 3],
        ]}
      />
    </g>
  );
}

function BottomParts() {
  return (
    <g transform="translate(545 380) scale(0.3333)">
      <path d="M84 37V74M213 37V74M84 147V184M213 147V184" strokeWidth="5" />
      <path d="M247 210H258V206H265V210H272M250 270H262V265H268M382 283L392 270L410 248L425 232L428 215L440 205L452 190L466 180V220H577V232H590V245H577V248H553V254H577V260H588V275H577V283H360M425 232L445 245M428 215L444 240M45 113H68" />
      <path d="M690 44H748L760 54V152L748 163H690L678 152V54ZM690 169H748L760 179V280L748 290H690L678 280V179ZM690 66Q700 72 712 66Q706 76 712 86Q700 80 690 86Q696 76 690 66Z" />
      <path d="M88 298H206V350H212V372H206V385H211V400H206V445H88V405H78V395H70V350H78V343H70V310H88ZM227 300H344V347H349V372H344V445H227V402H210V355H227V320H218V308H227Z" />
      <path d="M358 300H431V358H405V364H431V445H358V427H382V420H358V400H350V378H358V345H350V318H358V328H382V320H358Z" />
      <path d="M438 290H484V372H438ZM441 375H484V430Q480 447 463 447Q445 445 441 430ZM499 290H516V300H611V332H606V350H611V445H587V395H572V375H500ZM516 320H524V355H516ZM516 345H524V360H572" />
      <path d="M488 405V395H500V375H572V395H582V405H572V425H578V432H572V445H552V430H518V445H500V430H488ZM500 388H524M545 388H570" />
      <path d="M640 308H650V298H667V308H705V298H722V308H763V436H732V447H715V436H667V447H650V436H640ZM690 308V330H698M690 436V415M755 343H748V358H690Q676 362 676 372Q678 384 690 385H748V403H755Z" />
      <path d="M106 460H82V506H106M205 462H170V505H208M273 460H248V506H275M372 462H335V505H370M438 458H416V505H440M540 462H503V505H555L575 490V475L555 462H540M106 460H140M106 506H140M205 462H225M275 460H300M275 506H300M372 462H395L410 475V495L392 505H370M440 458H470M440 505H470M208 505H222M225 462L240 472V495L222 505" />
      <Slots
        at={[
          [130, 232, 36, 6], [718, 53, 12, 12], [736, 61, 16, 9], [718, 127, 12, 17], [736, 148, 16, 11], [718, 180, 12, 12], [736, 185, 18, 11],
          [718, 253, 12, 17], [736, 274, 16, 11], [151, 367, 42, 28], [289, 370, 42, 26], [364, 346, 36, 39], [242, 340, 8, 35], [322, 316, 14, 16],
          [658, 343, 9, 60], [8, 217, 9, 15], [8, 254, 9, 16],
        ]}
      />
      <Holes
        at={[
          [69, 257, 12], [424, 33, 9], [700, 117, 9], [700, 200, 9], [700, 242, 9], [463, 341, 24], [463, 341, 18], [463, 425, 14],
          [132, 483, 31], [132, 483, 20], [220, 483, 15], [299, 483, 31], [299, 483, 20], [387, 485, 15], [466, 483, 31], [466, 483, 20], [552, 482, 15],
          [91, 468, 3], [91, 497, 3], [179, 472, 3], [179, 494, 3], [257, 468, 3], [257, 497, 3], [345, 472, 3], [345, 494, 3], [425, 468, 3], [425, 497, 3],
          [512, 472, 3], [512, 494, 3], [109, 325, 7], [109, 388, 7], [190, 355, 6], [80, 356, 3], [80, 388, 3], [157, 309, 3], [197, 309, 5],
          [157, 340, 3], [157, 404, 3], [157, 434, 4], [197, 434, 5], [98, 305, 3], [98, 438, 3], [121, 356, 3], [134, 359, 3], [121, 387, 3], [134, 385, 3],
          [295, 311, 7], [295, 340, 7], [295, 405, 7], [295, 436, 7], [332, 405, 7], [332, 436, 7], [259, 358, 6], [271, 361, 6], [259, 387, 6], [271, 387, 6],
          [218, 357, 7], [218, 388, 7], [237, 311, 3], [237, 436, 3], [246, 325, 3], [329, 357, 3], [449, 296, 3], [475, 296, 3], [451, 381, 3], [474, 381, 3],
          [133, 149, 3], [181, 149, 3], [148, 187, 3], [173, 184, 3], [148, 205, 3], [173, 202, 3], [190, 202, 4], [107, 188, 3], [101, 205, 3],
          [211, 236, 3], [85, 236, 3], [107, 62, 3], [190, 59, 3], [101, 22, 2], [197, 22, 2], [258, 270, 4], [512, 296, 4], [512, 320, 3], [605, 325, 3],
          [605, 425, 3], [695, 320, 4], [736, 320, 3], [695, 350, 3], [736, 350, 3], [695, 394, 3], [736, 394, 3], [695, 424, 4], [736, 424, 3],
          [725, 87, 3], [725, 211, 3], [365, 308, 4], [365, 438, 3], [425, 438, 4], [46, 350, 3], [44, 392, 3],
        ]}
      />
      <Links at={[[614, 475], [644, 475], [676, 475], [707, 475]]} />
    </g>
  );
}

const gridX = Array.from({ length: 25 }, (_, i) => Math.round(922.5 - 28.6 * (i + 1)));
const gridY = Array.from({ length: 17 }, (_, i) => Math.round(135.6 + 28.6 * (i + 1)));

function Stage() {
  return (
    <svg
      viewBox="52 131 999 525"
      preserveAspectRatio="xMidYMin meet"
      className="min-h-0 w-full flex-1 bg-white"
      fill="none"
      stroke="#000"
      shapeRendering="crispEdges"
    >
      <path d="M52 656V131.500H1050.500V655.500H52.500V131" />
      <g stroke="#a4a494" strokeDasharray="3 3">
        {gridX.map((x) => (
          <path key={x} d={`M${x}.5 137V651`} />
        ))}
        {gridY.map((y) => (
          <path key={y} d={`M180 ${y}.5H921`} />
        ))}
      </g>
      <rect x="179" y="136" width="742" height="513" strokeWidth="2" />
      <g strokeWidth="3">
        <Chassis />
        <LowerParts />
        <SideParts />
        <BottomParts />
      </g>
      <rect x="792.500" y="216.500" width="15" height="15" fill="#0f0" />
      <path d="M894 136.500H921M922 137v28" stroke="#00f" strokeWidth="3" />
      <path d="M890 136.500l10-5v10zM922 168l-6-10h12z" fill="#00f" stroke="none" />
      <rect x="919" y="133" width="6" height="6" fill="#f00" stroke="none" />
    </svg>
  );
}

const ruleFont = { fontFamily: "'DejaVu Sans Condensed', 'DejaVu Sans', sans-serif", fontWeight: 700, fontSize: 13, fill: "#383838" };

function TopRuler() {
  const ticks = Array.from({ length: 88 }, (_, i) => i - 12);
  return (
    <svg viewBox="50 112 1018 18" className="h-[18px] w-full bg-[#fafafa]" shapeRendering="crispEdges">
      {ticks.map((i) => {
        const x = Math.round(921.5 - i * 11.44);
        const top = i % 10 === 0 ? 112 : i % 5 === 0 ? 122 : 126;
        return x > 53 && x < 1066 ? <path key={i} d={`M${x}.5 ${top}V129`} stroke="#000" /> : null;
      })}
      <path d="M931 112v17" stroke="#000" strokeWidth="2" />
      {[1400, 1200, 1000, 800, 600, 400, 200, 0, -200].map((v) => (
        <text key={v} x={922 - v * 0.572} y="124" textAnchor="end" {...ruleFont}>
          {v.toFixed(1)}
        </text>
      ))}
    </svg>
  );
}

function LeftRuler() {
  const ticks = Array.from({ length: 46 }, (_, i) => i);
  return (
    <svg
      viewBox="33 131 17 542"
      preserveAspectRatio="xMidYMin meet"
      className="min-h-0 w-[17px] flex-1 bg-[#fafafa]"
      shapeRendering="crispEdges"
    >
      {ticks.map((i) => {
        const y = Math.round(135 + i * 11.44);
        const left = i % 10 === 0 ? 33 : i % 5 === 0 ? 43 : 46;
        return <path key={i} d={`M${left} ${y}.5H49`} stroke="#000" />;
      })}
      <path d="M34 553h15" stroke="#000" strokeWidth="2" />
      {[200, 400, 600, 800].map((v) => (
        <text key={v} transform={`translate(45 ${136 + v * 0.572}) rotate(-90)`} {...ruleFont}>
          {v.toFixed(1)}
        </text>
      ))}
    </svg>
  );
}

function Arrow({ d }: { d: string }) {
  return (
    <svg width="10" height="10" viewBox="0 0 10 10" fill="none" stroke="#555" strokeWidth="2">
      <path d={d} />
    </svg>
  );
}

function Workspace() {
  return (
    <div className="flex min-w-0 flex-1">
      <div className="flex w-[17px] shrink-0 flex-col">
        <div className="h-[18px] bg-[#fafafa]" />
        <div className="h-[2px] bg-[#808080]" />
        <LeftRuler />
      </div>
      <div className="flex min-w-0 flex-1 flex-col border-l-2 border-[#808080]">
        <TopRuler />
        <div className="h-[2px] bg-[#808080]" />
        <div className="flex min-h-0 flex-1">
          <Stage />
          <div className="flex w-[17px] shrink-0 flex-col items-center justify-between py-1">
            <Arrow d="M1 7l4-4 4 4" />
            <div className="-mt-[106px] h-[17px] w-[15px] bg-[#cdcdcd]" />
            <Arrow d="M1 3l4 4 4-4" />
          </div>
        </div>
        <div className="flex h-[18px] items-center justify-between pr-[20px] pb-[1px] pl-1">
          <Arrow d="M7 1L3 5l4 4" />
          <div className="ml-[306px] h-[15px] w-[17px] bg-[#cdcdcd]" />
          <Arrow d="M3 1l4 4-4 4" />
        </div>
      </div>
    </div>
  );
}

/* ---------- right side panes ---------- */

function PaneBar() {
  return (
    <div className="flex h-[15px] shrink-0 items-center justify-between pr-1 pl-1">
      <div className="mr-[5px] h-[7px] flex-1 border-y border-r border-[#a0a0a0]">
        <div className="mt-[2px] h-[1px] bg-white" />
      </div>
      <button type="button" aria-label="Close pane" className="w-[9px]">
        <svg width="7" height="7" stroke="#000" strokeWidth="2">
          <path d="M1 1l5 5M6 1L1 6" />
        </svg>
      </button>
    </div>
  );
}

type PushProps = { children?: ReactNode; className?: string; look?: "plain" | "primary" | "off" };

const looks = {
  plain: "border border-[#adadad] bg-[#e1e1e1] ",
  primary: "border-2 border-[#0078d7] bg-[#e1e1e1] ",
  off: "border border-[#bfbfbf] bg-[#cccccc] ",
};

function Push({ children, className = "", look = "plain" }: PushProps) {
  return (
    <button type="button" disabled={look === "off"} className={"text-center leading-none " + looks[look] + className}>
      {children}
    </button>
  );
}

const tabs: [string, string][] = [
  ["Output", "w-[45px]"],
  ["Doc", "w-[41px] pr-3"],
  ["User", "w-[43px] pr-2"],
  ["Test", "w-[42px] pr-2"],
  ["Transform", "w-[59px]"],
];

function LayerTable() {
  return (
    <div className="mr-1 ml-[3px] mt-[2px] h-[177px] overflow-hidden border border-[#828790] bg-white">
      <table className="w-full table-fixed border-collapse">
        <colgroup>
          <col className="w-[51px]" />
          <col className="w-[60px]" />
          <col className="w-[55px]" />
          <col className="w-[55px]" />
          <col />
        </colgroup>
        <thead>
          <tr className="h-[24px]">
            {["Layer", "Mode", "Speed", "Power", "Output"].map((h) => (
              <th key={h} className="border-r border-[#e5e5e5] p-0 pt-1 font-normal first:pr-3">
                {h}
              </th>
            ))}
          </tr>
        </thead>
        <tbody>
          <tr className={"h-[17px] text-[13px] leading-none " + segoe}>
            <td className="border-r border-b border-[#ededed] bg-black bg-clip-padding p-0" />
            {["Cut", "25.0", "80.0", "Yes"].map((c) => (
              <td key={c} className="border-r border-b border-[#ededed] p-0 pt-[2px] text-center">
                {c}
              </td>
            ))}
          </tr>
          {Array.from({ length: 8 }, (_, i) => (
            <tr key={i} className="h-[17px]">
              {Array.from({ length: 5 }, (_, j) => (
                <td key={j} className="border-r border-b border-[#ededed] p-0" />
              ))}
            </tr>
          ))}
        </tbody>
      </table>
    </div>
  );
}

function MirrorBox({ axis }: { axis: string }) {
  return (
    <div className="flex h-[20px] items-center gap-[9px] pl-[5px] text-[#838383]">
      {["H", "V"].map((m) => (
        <label key={m} className="flex w-[27px] items-center gap-[2px]">
          <input type="checkbox" aria-label={`Mirror ${axis} ${m}`} disabled className="h-[13px] w-[13px] appearance-none border border-[#ccc] bg-white" />
          {m}
        </label>
      ))}
    </div>
  );
}

function WorkPane() {
  return (
    <section className="flex min-h-0 flex-1 flex-col overflow-hidden border-t border-white">
      <PaneBar />
      <div className="mr-1 ml-[5px] flex min-h-0 flex-1 flex-col overflow-hidden">
        <div className="flex h-[21px] shrink-0 items-end border-b border-[#dcdcdc]" role="tablist">
          <button type="button" role="tab" aria-selected className="-mb-[1px] h-[21px] w-[45px] border border-b-0 border-[#dcdcdc] bg-white pr-[6px] pb-[1px]">
            Work
          </button>
          {tabs.map(([name, w]) => (
            <button key={name} type="button" role="tab" aria-selected={false} className={"h-[18px] border-t border-r border-[#dcdcdc] pt-[2px] " + w}>
              {name}
            </button>
          ))}
        </div>
        <div className="border-l border-[#dcdcdc]">
          <LayerTable />
          <div className="mt-[7px] flex justify-center gap-3 pr-[14px]">
            <Push look="primary" className="h-[19px] w-[73px]">Up</Push>
            <Push className="h-[19px] w-[73px]">Down</Push>
          </div>
          <div className="mr-[6px] ml-[3px] mt-[3px] h-[2px] border-b border-white bg-[#a0a0a0]" />
          <fieldset className="mr-1 ml-[3px] mt-[7px] border border-[#dcdcdc] px-[4px] pb-4">
            <legend className="px-[3px] leading-[14px]">Line/column setup</legend>
            <div className="grid grid-cols-[29px_53px_53px_53px_77px] gap-x-[1px] text-center">
              <span />
              <span className="h-[22px] pt-[3px]">Num</span>
              <span className="pt-[3px]">space</span>
              <span className="pt-[3px]">Dislocation</span>
              <span className="pt-[3px]">Mirror</span>
              {["X", "Y"].map((axis) => (
                <div key={axis} className="contents">
                  <span className="pt-1 pr-[6px] text-right">{axis}:</span>
                  {["1", "0.000", "0.000"].map((v, i) => (
                    <NumField key={i} label={`${axis} ${["num", "space", "dislocation"][i]}`} value={v} className="mb-[1px] h-[20px] w-full" />
                  ))}
                  <div className={"border-x border-[#6d6d6d] " + (axis === "X" ? "border-t" : "border-b")}>
                    <MirrorBox axis={axis} />
                  </div>
                </div>
              ))}
            </div>
            <div className="mt-[4px] flex pl-1 text-[#838383]">
              <button type="button" aria-label="Array direction" className="mr-[2px] h-[26px] w-[25px] border-2 border-[#000] bg-white">
                <svg width="21" height="22" fill="#0cc" stroke="#000">
                  <path d="M2 2h15M2 2v17M15 1l2 1-2 1" fill="none" />
                  {[6, 12, 18].map((y) => [6, 12, 18].map((x) => <rect key={`${x}-${y}`} x={x - 0.5} y={y - 0.5} width="3" height="3" />))}
                  <path d="M0 0h3v3H0z" fill="#00f" stroke="none" />
                </svg>
              </button>
              <Push look="off" className="h-[23px] w-[79px]">Virtual array</Push>
              <Push look="off" className="ml-[3px] h-[23px] w-[76px]">Bestrew...</Push>
              <Push look="off" className="ml-[4px] h-[23px] w-[76px]">Adjust</Push>
            </div>
          </fieldset>
        </div>
      </div>
      <div className="mt-[3px] h-[1px] bg-[#a0a0a0]" />
    </section>
  );
}

function LaserPane() {
  return (
    <section className="flex h-[202px] shrink-0 flex-col overflow-hidden border-t border-white">
      <PaneBar />
      <div className="mr-[3px] ml-[6px] min-h-0 flex-1 overflow-hidden">
        <fieldset className="border border-[#dcdcdc] pr-[11px] pb-[3px] pl-[9px]">
          <legend className="-ml-[4px] px-[3px] leading-[14px]">Laser work</legend>
          <div className="mt-[3px] grid grid-cols-[90px_99px_70px] gap-x-[3px] gap-y-[4px]">
            {["Start", "Pause/Continue", "Stop", "SaveToUFile", "UFileOutput", "Download"].map((b) => (
              <Push key={b} className="h-[21px]">{b}</Push>
            ))}
          </div>
          <div className="mt-[5px] flex">
            <label htmlFor="position" className="w-[95px] pt-[8px] pr-[5px] text-right leading-[14px]">
              Position:
            </label>
            <div className="relative w-[173px]">
              <select id="position" className="h-[21px] w-full appearance-none border border-[#adadad] bg-[#e1e1e1] pl-[2px]">
                <option>Current position</option>
              </select>
              <svg width="10" height="6" fill="none" stroke="#555" className="pointer-events-none absolute top-2 right-1">
                <path d="M1 1l4 4 4-4" />
              </svg>
            </div>
          </div>
          <div className="mt-[11px] flex justify-between pr-[3px]">
            <div className="-ml-[1px] leading-[15px]">
              <div className="flex items-center gap-[2px]">
                <span className="relative flex h-[13px] w-[13px]">
                  <input id="path-opt" type="checkbox" defaultChecked className="h-[13px] w-[13px] appearance-none border border-[#333] bg-white" />
                  <svg width="11" height="11" fill="none" stroke="#222" className="pointer-events-none absolute top-[1px] left-[1px]">
                    <path d="M1.500 5.500l3 3 5-6" />
                  </svg>
                </span>
                <label htmlFor="path-opt">Path optimize</label>
              </div>
              <label className="flex items-center gap-[2px]">
                <input type="checkbox" className="h-[13px] w-[13px] appearance-none border border-[#333] bg-white" />
                Output select graphics
              </label>
              <label className="mt-[3px] ml-[17px] flex items-center gap-[2px] text-[#838383]">
                <input type="checkbox" disabled className="h-[13px] w-[13px] appearance-none border border-[#ccc] bg-white" />
                Selected graphics position
              </label>
            </div>
            <div className="flex w-[70px] flex-col gap-[4px]">
              <Push className="h-[21px]">Cut scale</Push>
              <Push className="h-[21px]">Go scale</Push>
            </div>
          </div>
        </fieldset>
        <fieldset className="mt-[5px] border border-[#dcdcdc] pl-[9px]">
          <legend className="-ml-[4px] px-[3px] leading-[14px]">Device</legend>
          <div className="mt-[5px] grid grid-cols-[90px_173px] gap-[5px]">
            <Push className="h-[21px]" />
            <Push className="h-[21px]" />
          </div>
        </fieldset>
      </div>
      <div className="mt-[2px] h-[1px] shrink-0 bg-[#a0a0a0]" />
    </section>
  );
}

/* ---------- frame ---------- */

const palette = [
  "#000000", "#0000ff", "#ff0000", "#00ff00", "#fa8072", "#ffff00", "#1e90ff", "#8b3510", "#808000", "#008060",
  "#ff4500", "#400080", "#ffd0da", "#b19efa", "#d8fc9c", "#ff9056", "#db7093", "#8870dc", "#76de76", "#b4a073",
];

const menus = ["File(F)", "Edit(E)", "Draw(D)", "Config(S)", "Handle(W)", "View(V)", "Help(H)", "Model(M)"];

export default function App() {
  return (
    <div className={"flex h-screen flex-col overflow-hidden bg-[#f0f0f0] text-[11px] text-black " + ui}>
      <header className={"bg-white text-[12px] " + segoe}>
        <div className="flex h-[22px] items-center">
          <svg width="16" height="16" viewBox="0 0 16 16" fill="#e00" className="mr-[5px] ml-[2px]">
            <path d="M8 0l3 4-1 2h2V5l4 3-4 3v-1h-2l1 2-3 4-3-4 1-2H4v1L0 8l4-3v1h2L5 4z" />
          </svg>
          <h1 className="flex-1 pt-[2px]">V8.01.11-[C:\Users\ULISES\Desktop\Corte ODI 3D - 6mm.rld]</h1>
          {[
            ["Minimize", "M1 6.500h10"],
            ["Restore", "M1.500 4.500h7v7h-7zM3.500 4V1.500h7v7H9"],
            ["Close", "M1 1l10 10M11 1L1 11"],
          ].map(([label, d]) => (
            <button key={label} type="button" aria-label={label} className="flex w-[46px] items-center justify-center">
              <svg width="12" height="12" fill="none" stroke="#000">
                <path d={d} />
              </svg>
            </button>
          ))}
          <span className="w-[2px]" />
        </div>
        <nav className="flex h-[20px] items-center gap-[13px] pt-[2px] pl-[7px]">
          {menus.map((m) => (
            <button key={m} type="button">
              {m}
            </button>
          ))}
        </nav>
      </header>
      <div className="mt-[1px] border-t border-b border-t-[#a0a0a0] border-b-[#a0a0a0]">
        <FileTools />
      </div>
      <AxisTools />
      <main className="flex min-h-0 flex-1 border-t-2 border-[#808080]">
        <DrawTools />
        <Workspace />
        <aside className="ml-[2px] flex w-[296px] shrink-0 flex-col">
          <WorkPane />
          <LaserPane />
        </aside>
      </main>
      <div className="flex h-[34px] shrink-0 items-center border-t border-white pb-[2px]">
        <div className="flex w-5 flex-col items-center gap-2 pr-[6px]">
          <svg width="7" height="7" stroke="#000" strokeWidth="2">
            <path d="M1 1l5 5M6 1L1 6" />
          </svg>
          <svg width="6" height="8" stroke="#a0a0a0">
            <path d="M1.500 0v8M4.500 0v8" />
          </svg>
        </div>
        <div className="grid w-[510px] grid-cols-20">
          {palette.map((c) => (
            <button key={c} type="button" aria-label={`Layer colour ${c}`} className="mr-[1px] h-[25px] border border-[#a0a0a0]" style={{ backgroundColor: c }} />
          ))}
        </div>
      </div>
      <footer className={"flex h-[20px] shrink-0 gap-[2px] border-t border-[#a0a0a0] pt-[1px] text-[12px] leading-[17px] " + segoe}>
        <div className="flex-1 border border-[#a0a0a0] pl-[2px]">
          --- *Welcome to use the Laser system of cutting,Propose the display area 1024*768 or higher *---
        </div>
        <div className="w-[6px] border border-[#a0a0a0]" />
        <div className="w-[185px] border border-[#a0a0a0] pl-[2px]">X:-15.452mm,Y:730.321mm</div>
      </footer>
      <div className="h-[4px] shrink-0 bg-[#2b2b2d]" />
    </div>
  );
}
